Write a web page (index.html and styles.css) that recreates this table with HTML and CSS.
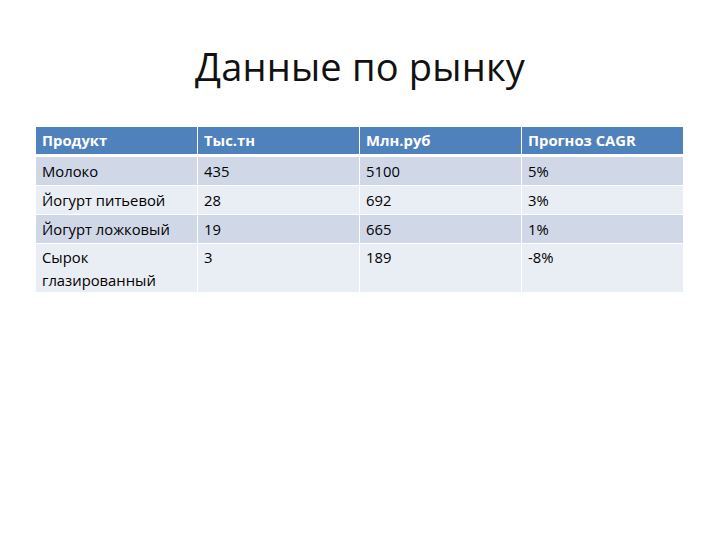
FILE: index.html
```html
<!DOCTYPE html>
<html lang="ru">
<head>
<meta charset="utf-8">
<link rel="stylesheet" href="styles.css">
</head>
<body>
<div class="slide">
  <h1 class="title">Данные по рынку</h1>
  <table class="data">
    <thead>
      <tr><th>Продукт</th><th>Тыс.тн</th><th>Млн.руб</th><th>Прогноз CAGR</th></tr>
    </thead>
    <tbody>
      <tr class="odd"><td>Молоко</td><td>435</td><td>5100</td><td>5%</td></tr>
      <tr class="even"><td>Йогурт питьевой</td><td>28</td><td>692</td><td>3%</td></tr>
      <tr class="odd"><td>Йогурт ложковый</td><td>19</td><td>665</td><td>1%</td></tr>
      <tr class="even tall"><td>Сырок<br>глазированный</td><td>3</td><td>189</td><td>-8%</td></tr>
    </tbody>
  </table>
</div>
</body>
</html>
```
FILE: styles.css
```css
html, body {
  margin: 0;
  padding: 0;
  background: #ffffff;
}
.slide {
  width: 720px;
  height: 540px;
  font-family: "Open Sans", "Noto Sans", sans-serif;
  color: #000;
}
.title {
  margin: 0;
  padding-top: 40px;
  height: 86px;
  box-sizing: border-box;
  text-align: center;
  font-weight: 400;
  font-size: 38px;
  line-height: 52px;
  letter-spacing: 0.2px;
  color: #111;
}
.data {
  margin: 40px 0 0 35px;
  width: 649px;
  border-collapse: collapse;
  table-layout: fixed;
  font-size: 14.8px;
}
.data th, .data td {
  border: 1.5px solid #ffffff;
  padding: 0 6px;
  text-align: left;
  vertical-align: top;
  width: 25%;
}
.data th {
  background: #4f81bd;
  color: #ffffff;
  font-weight: 700;
  height: 27px;
  line-height: 27px;
  border-bottom: 3px solid #ffffff;
}
.data td {
  height: 28px;
  line-height: 28px;
}
.data tr.odd td { background: #d0d8e8; }
.data tr.even td { background: #e9edf4; }
.data tr.tall td {
  height: 46px;
  line-height: 23px;
  padding-top: 2px;
}
```
